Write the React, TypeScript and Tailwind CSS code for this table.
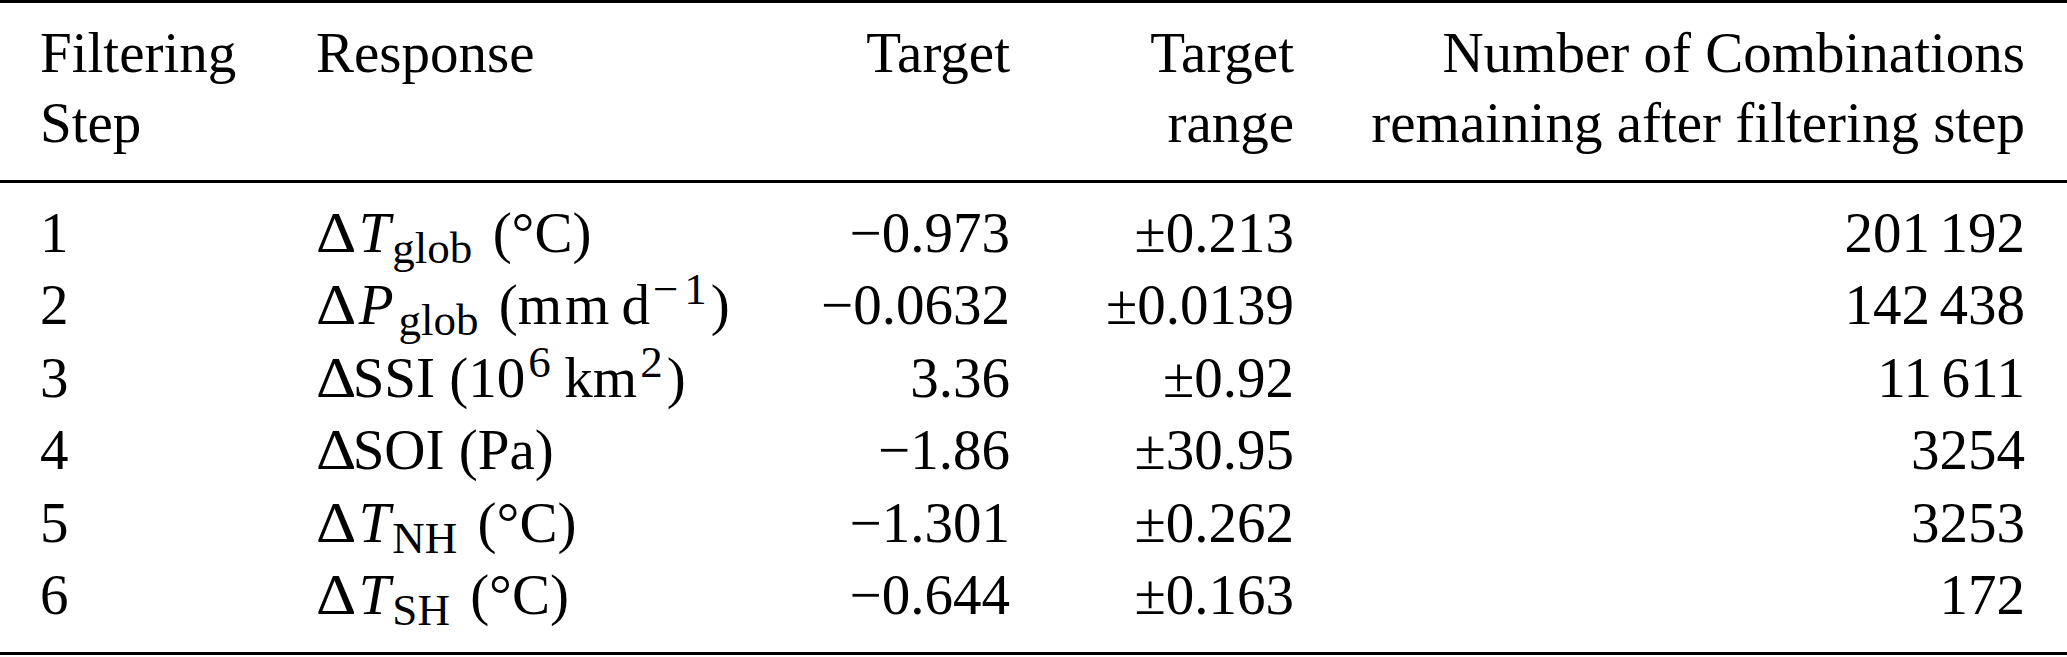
import React from "react";

const Sub = ({ children, ml = "ml-[2px]" }: { children: React.ReactNode; ml?: string }) => (
  <span className={`relative top-[11px] ${ml} mr-[6px] text-[45px] leading-none`}>{children}</span>
);
const Sup = ({ children }: { children: React.ReactNode }) => (
  <span className="relative top-[-20px] ml-[3px] mr-[4px] text-[45px] leading-none">{children}</span>
);
const Thin = () => <span className="inline-block w-[9.5px]" />;
const D = () => <span className="inline-block origin-left scale-x-[1.1]">Δ</span>;

const cols = "grid grid-cols-[276px_420px_274px_284px_731px]";

type Row = {
  step: string;
  resp: React.ReactNode;
  target: string;
  range: string;
  n: React.ReactNode;
};

const rows: Row[] = [
  {
    step: "1",
    resp: (
      <>
        <D />
        <i className="ml-[6px]">T</i>
        <Sub>glob</Sub> (°C)
      </>
    ),
    target: "−0.973",
    range: "±0.213",
    n: (
      <>
        201
        <Thin />
        192
      </>
    ),
  },
  {
    step: "2",
    resp: (
      <>
        <D />
        <i className="ml-[6px]">P</i>
        <Sub ml="ml-[5px]">glob</Sub> (<span className="tracking-[3px]">mm</span>
        <span className="inline-block w-[9px]" />d
        <Sup>
          <span className="mr-[6px]">−</span>1
        </Sup>
        )
      </>
    ),
    target: "−0.0632",
    range: "±0.0139",
    n: (
      <>
        142
        <Thin />
        438
      </>
    ),
  },
  {
    step: "3",
    resp: (
      <>
        <D />
        SSI (10<Sup>6</Sup>
        <Thin />
        km<Sup>2</Sup>)
      </>
    ),
    target: "3.36",
    range: "±0.92",
    n: (
      <>
        11
        <Thin />
        611
      </>
    ),
  },
  {
    step: "4",
    resp: (
      <>
        <D />
        SOI (Pa)
      </>
    ),
    target: "−1.86",
    range: "±30.95",
    n: "3254",
  },
  {
    step: "5",
    resp: (
      <>
        <D />
        <i className="ml-[6px]">T</i>
        <Sub>NH</Sub> (°C)
      </>
    ),
    target: "−1.301",
    range: "±0.262",
    n: "3253",
  },
  {
    step: "6",
    resp: (
      <>
        <D />
        <i className="ml-[6px]">T</i>
        <Sub>SH</Sub> (°C)
      </>
    ),
    target: "−0.644",
    range: "±0.163",
    n: "172",
  },
];

export default function App() {
  return (
    <div className="w-[2067px] h-[657px] bg-white text-black font-['Liberation_Serif','Times_New_Roman',serif] text-[57px]">
      <div className="border-t-[3px] border-b-[3px] border-black">
        <div className={`${cols} pl-[40px] pr-[42px] pt-[15px] pb-[22px] leading-[70px] border-b-[3px] border-black`}>
          <div>
            <div>Filtering</div>
            <div>Step</div>
          </div>
          <div>Response</div>
          <div className="text-right">Target</div>
          <div className="text-right">
            <div>Target</div>
            <div>range</div>
          </div>
          <div className="text-right">
            <div>Number of Combinations</div>
            <div>remaining after filtering step</div>
          </div>
        </div>
        <div className="pl-[40px] pr-[42px] pt-[13.5px] pb-[20px] leading-[72.6px]">
          {rows.map((r) => (
            <div key={r.step} className={`${cols} whitespace-nowrap`}>
              <div>{r.step}</div>
              <div>{r.resp}</div>
              <div className="text-right">{r.target}</div>
              <div className="text-right">{r.range}</div>
              <div className="text-right">{r.n}</div>
            </div>
          ))}
        </div>
      </div>
    </div>
  );
}
